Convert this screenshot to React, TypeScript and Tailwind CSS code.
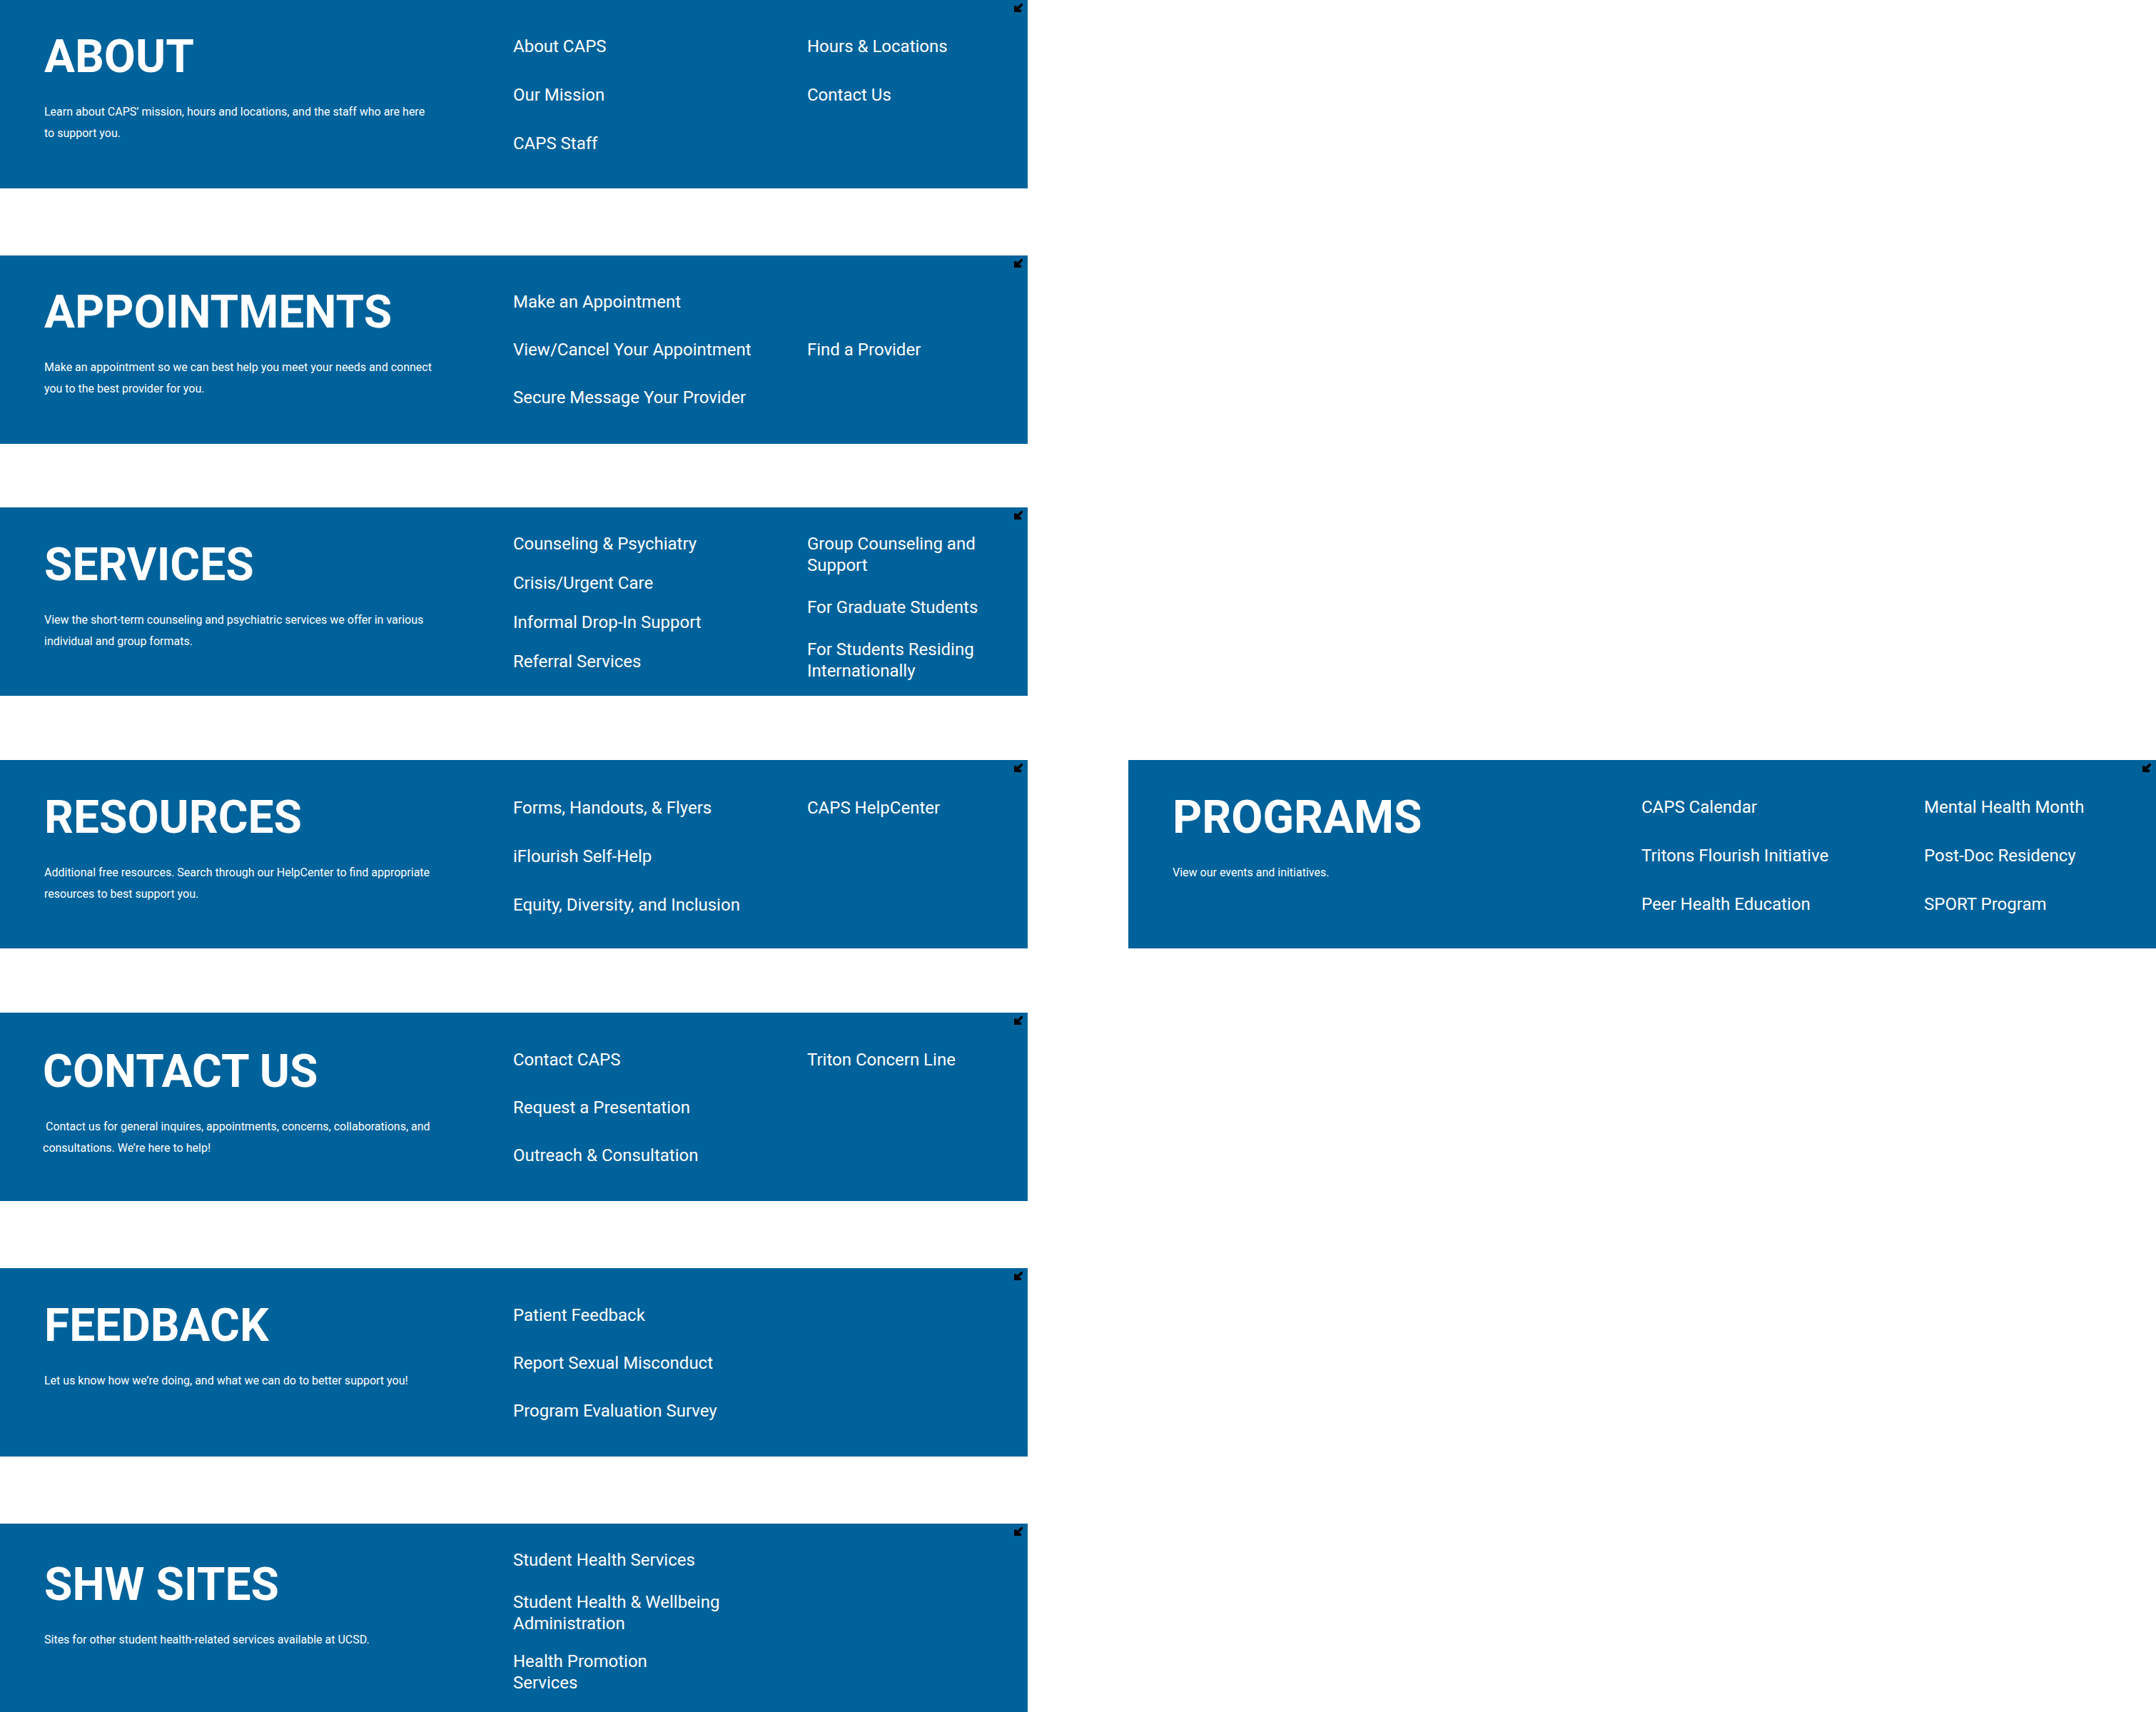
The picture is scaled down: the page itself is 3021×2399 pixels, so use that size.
type LinkItem = string[];

type Column = {
  cls: string;
  items: LinkItem[];
  itemCls?: string[];
};

type Panel = {
  title: string;
  desc: string[];
  headCls: string;
  cols: Column[];
};

// each column carries its own width / offsets, the site spaces them a bit differently per block
const about: Panel = {
  title: 'ABOUT',
  headCls: 'pl-[62px] pt-[48px]',
  desc: ['Learn about CAPS’ mission, hours and locations, and the staff who are here', 'to support you.'],
  cols: [
    { cls: 'w-[412px] pt-[50px] gap-[38px]', items: [['About CAPS'], ['Our Mission'], ['CAPS Staff']] },
    { cls: 'pt-[50px] gap-[38px]', items: [['Hours & Locations'], ['Contact Us']] },
  ],
};

const appointments: Panel = {
  title: 'APPOINTMENTS',
  headCls: 'pl-[62px] pt-[48px]',
  desc: ['Make an appointment so we can best help you meet your needs and connect', 'you to the best provider for you.'],
  cols: [
    {
      cls: 'w-[412px] pt-[50px] gap-[37px]',
      items: [['Make an Appointment'], ['View/Cancel Your Appointment'], ['Secure Message Your Provider']],
    },
    { cls: 'pt-[117px]', items: [['Find a Provider']] },
  ],
};

const services: Panel = {
  title: 'SERVICES',
  headCls: 'pl-[62px] pt-[49px]',
  desc: ['View the short-term counseling and psychiatric services we offer in various', 'individual and group formats.'],
  cols: [
    {
      cls: 'w-[412px] pt-[36px] gap-[25px]',
      items: [['Counseling & Psychiatry'], ['Crisis/Urgent Care'], ['Informal Drop-In Support'], ['Referral Services']],
    },
    {
      cls: 'pt-[36px] gap-[29px]',
      items: [
        ['Group Counseling and', 'Support'],
        ['For Graduate Students'],
        ['For Students Residing', 'Internationally'],
      ],
    },
  ],
};

const resources: Panel = {
  title: 'RESOURCES',
  headCls: 'pl-[62px] pt-[49px]',
  desc: ['Additional free resources. Search through our HelpCenter to find appropriate', 'resources to best support you.'],
  cols: [
    {
      cls: 'w-[412px] pt-[52px] gap-[38px]',
      items: [['Forms, Handouts, & Flyers'], ['iFlourish Self-Help'], ['Equity, Diversity, and Inclusion']],
    },
    { cls: 'pt-[52px]', items: [['CAPS HelpCenter']] },
  ],
};

const programs: Panel = {
  title: 'PROGRAMS',
  headCls: 'pl-[62px] pt-[49px]',
  desc: ['View our events and initiatives.'],
  cols: [
    {
      cls: 'w-[396px] pt-[51px] gap-[38px]',
      items: [['CAPS Calendar'], ['Tritons Flourish Initiative'], ['Peer Health Education']],
    },
    { cls: 'pt-[51px] gap-[38px]', items: [['Mental Health Month'], ['Post-Doc Residency'], ['SPORT Program']] },
  ],
};

const contact: Panel = {
  title: 'CONTACT US',
  headCls: 'pl-[60px] pt-[51px]',
  desc: ['\u00a0Contact us for general inquires, appointments, concerns, collaborations, and', 'consultations. We’re here to help!'],
  cols: [
    {
      cls: 'w-[412px] pt-[51px] gap-[37px]',
      items: [['Contact CAPS'], ['Request a Presentation'], ['Outreach & Consultation']],
    },
    { cls: 'pt-[51px]', items: [['Triton Concern Line']] },
  ],
};

const feedback: Panel = {
  title: 'FEEDBACK',
  headCls: 'pl-[62px] pt-[49px]',
  desc: ['Let us know how we’re doing, and what we can do to better support you!'],
  cols: [
    {
      cls: 'w-[412px] pt-[51px] gap-[37px]',
      items: [['Patient Feedback'], ['Report Sexual Misconduct'], ['Program Evaluation Survey']],
    },
  ],
};

const shwSites: Panel = {
  title: 'SHW SITES',
  headCls: 'pl-[62px] pt-[54px]',
  desc: ['Sites for other student health-related services available at UCSD.'],
  cols: [
    {
      cls: 'w-[412px] pt-[36px]',
      items: [['Student Health Services'], ['Student Health & Wellbeing', 'Administration'], ['Health Promotion', 'Services']],
      itemCls: ['', 'mt-[29px]', 'mt-[23px]'],
    },
  ],
};

function CollapseArrow() {
  return (
    <svg viewBox="0 0 12 12" className="absolute right-[7px] top-[5px] h-[12px] w-[12px]">
      <path d="M10.8 1.2 L3.4 8.6" stroke="#000" strokeWidth="3.6" strokeLinecap="square" />
      <path d="M0 3.2 H3.8 V8.2 H10 V12 H0 Z" fill="#000" />
    </svg>
  );
}

function MenuPanel({ panel }: { panel: Panel }) {
  return (
    <section className="relative flex h-[264px] w-[1440px] shrink-0 bg-[#00629b] text-white">
      <CollapseArrow />

      {/* titulo + descripcion */}
      <div className={`w-[719px] shrink-0 ${panel.headCls}`}>
        <h2 className="text-[64px] font-bold leading-none whitespace-nowrap">{panel.title}</h2>
        <p className="mt-[30px] text-[16px] leading-[30px] whitespace-nowrap">
          {panel.desc.map((line, i) => (
            <span key={i} className="block">
              {line}
            </span>
          ))}
        </p>
      </div>

      {/* columnas de enlaces */}
      {panel.cols.map((col, ci) => (
        <ul key={ci} className={`flex shrink-0 flex-col ${col.cls}`}>
          {col.items.map((item, ii) => (
            <li key={ii} className={col.itemCls ? col.itemCls[ii] : ''}>
              <a href="#" className="block text-[24px] leading-[30px] whitespace-nowrap text-white">
                {item.map((line, li) => (
                  <span key={li} className="block">
                    {line}
                  </span>
                ))}
              </a>
            </li>
          ))}
        </ul>
      ))}
    </section>
  );
}

export default function App() {
  return (
    <div className="h-[2399px] overflow-hidden bg-white font-[Roboto,sans-serif]">
      <MenuPanel panel={about} />
      <div className="mt-[94px]">
        <MenuPanel panel={appointments} />
      </div>
      <div className="mt-[89px]">
        <MenuPanel panel={services} />
      </div>
      <div className="mt-[90px] flex gap-[141px]">
        <MenuPanel panel={resources} />
        <MenuPanel panel={programs} />
      </div>
      <div className="mt-[90px]">
        <MenuPanel panel={contact} />
      </div>
      <div className="mt-[94px]">
        <MenuPanel panel={feedback} />
      </div>
      <div className="mt-[94px]">
        <MenuPanel panel={shwSites} />
      </div>
    </div>
  );
}
